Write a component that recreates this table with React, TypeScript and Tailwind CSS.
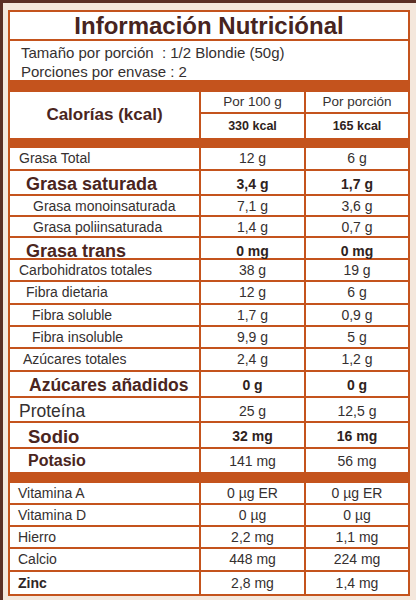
const ORANGE = 'border-[#c4531d]'

type Row = {
  label: string
  per100: string
  perServing: string
  h: string
  labelClass: string
  valueClass: string
}

const reg = "text-[14px] text-[#353030]"
const regVal = "text-[14px] text-[#353030]"
const boldVal = "text-[14px] font-bold text-[#2e2220]"

const fatRows: Row[] = [
  { label: 'Grasa Total', per100: '12 g', perServing: '6 g', h: 'h-[23px]', labelClass: `pl-[9px] ${reg}`, valueClass: regVal },
  { label: 'Grasa saturada', per100: '3,4 g', perServing: '1,7 g', h: 'h-[25px]', labelClass: 'pl-[16px] text-[18px] font-bold text-[#4a2520]', valueClass: boldVal },
  { label: 'Grasa monoinsaturada', per100: '7,1 g', perServing: '3,6 g', h: 'h-[21px]', labelClass: `pl-[23px] ${reg}`, valueClass: regVal },
  { label: 'Grasa poliinsaturada', per100: '1,4 g', perServing: '0,7 g', h: 'h-[21px]', labelClass: `pl-[23px] ${reg}`, valueClass: regVal },
  { label: 'Grasa trans', per100: '0 mg', perServing: '0 mg', h: 'h-[22px]', labelClass: 'pl-[16px] text-[18px] font-bold text-[#4a2520]', valueClass: boldVal },
  { label: 'Carbohidratos totales', per100: '38 g', perServing: '19 g', h: 'h-[22px]', labelClass: `pl-[9px] ${reg}`, valueClass: regVal },
  { label: 'Fibra dietaria', per100: '12 g', perServing: '6 g', h: 'h-[23px]', labelClass: `pl-[16px] ${reg}`, valueClass: regVal },
  { label: 'Fibra soluble', per100: '1,7 g', perServing: '0,9 g', h: 'h-[22px]', labelClass: `pl-[22px] ${reg}`, valueClass: regVal },
  { label: 'Fibra insoluble', per100: '9,9 g', perServing: '5 g', h: 'h-[22px]', labelClass: `pl-[22px] ${reg}`, valueClass: regVal },
  { label: 'Azúcares totales', per100: '2,4 g', perServing: '1,2 g', h: 'h-[23px]', labelClass: `pl-[13px] ${reg}`, valueClass: regVal },
  { label: 'Azúcares añadidos', per100: '0 g', perServing: '0 g', h: 'h-[26px]', labelClass: 'pl-[19px] text-[17.5px] font-bold text-[#4a2520]', valueClass: boldVal },
  { label: 'Proteína', per100: '25 g', perServing: '12,5 g', h: 'h-[25px]', labelClass: 'pl-[9px] text-[17.5px] text-[#353030]', valueClass: regVal },
  { label: 'Sodio', per100: '32 mg', perServing: '16 mg', h: 'h-[26px]', labelClass: 'pl-[18px] text-[18.5px] font-bold text-[#4a2520]', valueClass: boldVal },
  { label: 'Potasio', per100: '141 mg', perServing: '56 mg', h: 'h-[23px]', labelClass: 'pl-[18px] text-[16px] font-bold text-[#4a2520]', valueClass: regVal },
]

const vitRows: Row[] = [
  { label: 'Vitamina A', per100: '0 µg ER', perServing: '0 µg ER', h: 'h-[22px]', labelClass: `pl-[8px] ${reg}`, valueClass: regVal },
  { label: 'Vitamina D', per100: '0 µg', perServing: '0 µg', h: 'h-[22px]', labelClass: `pl-[8px] ${reg}`, valueClass: regVal },
  { label: 'Hierro', per100: '2,2 mg', perServing: '1,1 mg', h: 'h-[22px]', labelClass: `pl-[8px] ${reg}`, valueClass: regVal },
  { label: 'Calcio', per100: '448 mg', perServing: '224 mg', h: 'h-[23px]', labelClass: `pl-[8px] ${reg}`, valueClass: regVal },
  { label: 'Zinc', per100: '2,8 mg', perServing: '1,4 mg', h: 'h-[22px]', labelClass: 'pl-[8px] text-[14px] font-semibold text-[#2e2626]', valueClass: regVal },
]

function TableRow({ row, last }: { row: Row; last?: boolean }) {
  return (
    <div className={`grid grid-cols-[191px_105px_1fr] ${row.h} ${last ? '' : 'border-b-2'} ${ORANGE}`}>
      <div className={`flex items-center border-r-2 ${ORANGE} whitespace-nowrap ${row.labelClass}`}>{row.label}</div>
      <div className={`flex items-center justify-center border-r-2 ${ORANGE} ${row.valueClass}`}>{row.per100}</div>
      <div className={`flex items-center justify-center ${row.valueClass}`}>{row.perServing}</div>
    </div>
  )
}

export default function App() {
  return (
    <div
      className="w-[416px] h-[600px] bg-[#f4e7dc] border-t-[3px] border-l-[3px] border-[#5b2f25] pl-[5px] pt-[7px] overflow-hidden"
      style={{ fontFamily: '"Liberation Sans", Arial, sans-serif' }}
    >
      <div className={`w-[402px] bg-white border-2 ${ORANGE} flex flex-col`}>
        <div className={`h-[29px] border-b-2 ${ORANGE} flex items-center justify-center text-[24px] font-bold text-[#472420] leading-none`}>
          Información Nutriciónal
        </div>
        <div className="h-[39px] pl-[11px] pt-[3px] flex flex-col justify-center gap-[1px] text-[15px] text-[#353030] leading-[18px]">
          <div className="whitespace-pre">Tamaño por porción  : 1/2 Blondie (50g)</div>
          <div>Porciones por envase : 2</div>
        </div>
        <div className="h-[12px] bg-[#c4531d]" />

        <div className="grid grid-cols-[191px_105px_1fr] h-[46px]">
          <div className={`flex items-center justify-center border-r-2 ${ORANGE} text-[17px] font-bold text-[#4a2520]`}>
            Calorías (kcal)
          </div>
          <div className={`flex flex-col border-r-2 ${ORANGE}`}>
            <div className={`h-[22px] border-b-2 ${ORANGE} flex items-center justify-center text-[13.5px] text-[#353030]`}>Por 100 g</div>
            <div className="flex-1 flex items-center justify-center text-[12.5px] font-bold text-[#2e2220]">330 kcal</div>
          </div>
          <div className="flex flex-col">
            <div className={`h-[22px] border-b-2 ${ORANGE} flex items-center justify-center text-[13.5px] text-[#353030]`}>Por porción</div>
            <div className="flex-1 flex items-center justify-center text-[12.5px] font-bold text-[#2e2220]">165 kcal</div>
          </div>
        </div>
        <div className="h-[10px] bg-[#c4531d]" />

        {fatRows.map((r, i) => (
          <TableRow key={r.label} row={r} last={i === fatRows.length - 1} />
        ))}
        <div className="h-[11px] bg-[#c4531d]" />
        {vitRows.map((r, i) => (
          <TableRow key={r.label} row={r} last={i === vitRows.length - 1} />
        ))}
      </div>
    </div>
  )
}
